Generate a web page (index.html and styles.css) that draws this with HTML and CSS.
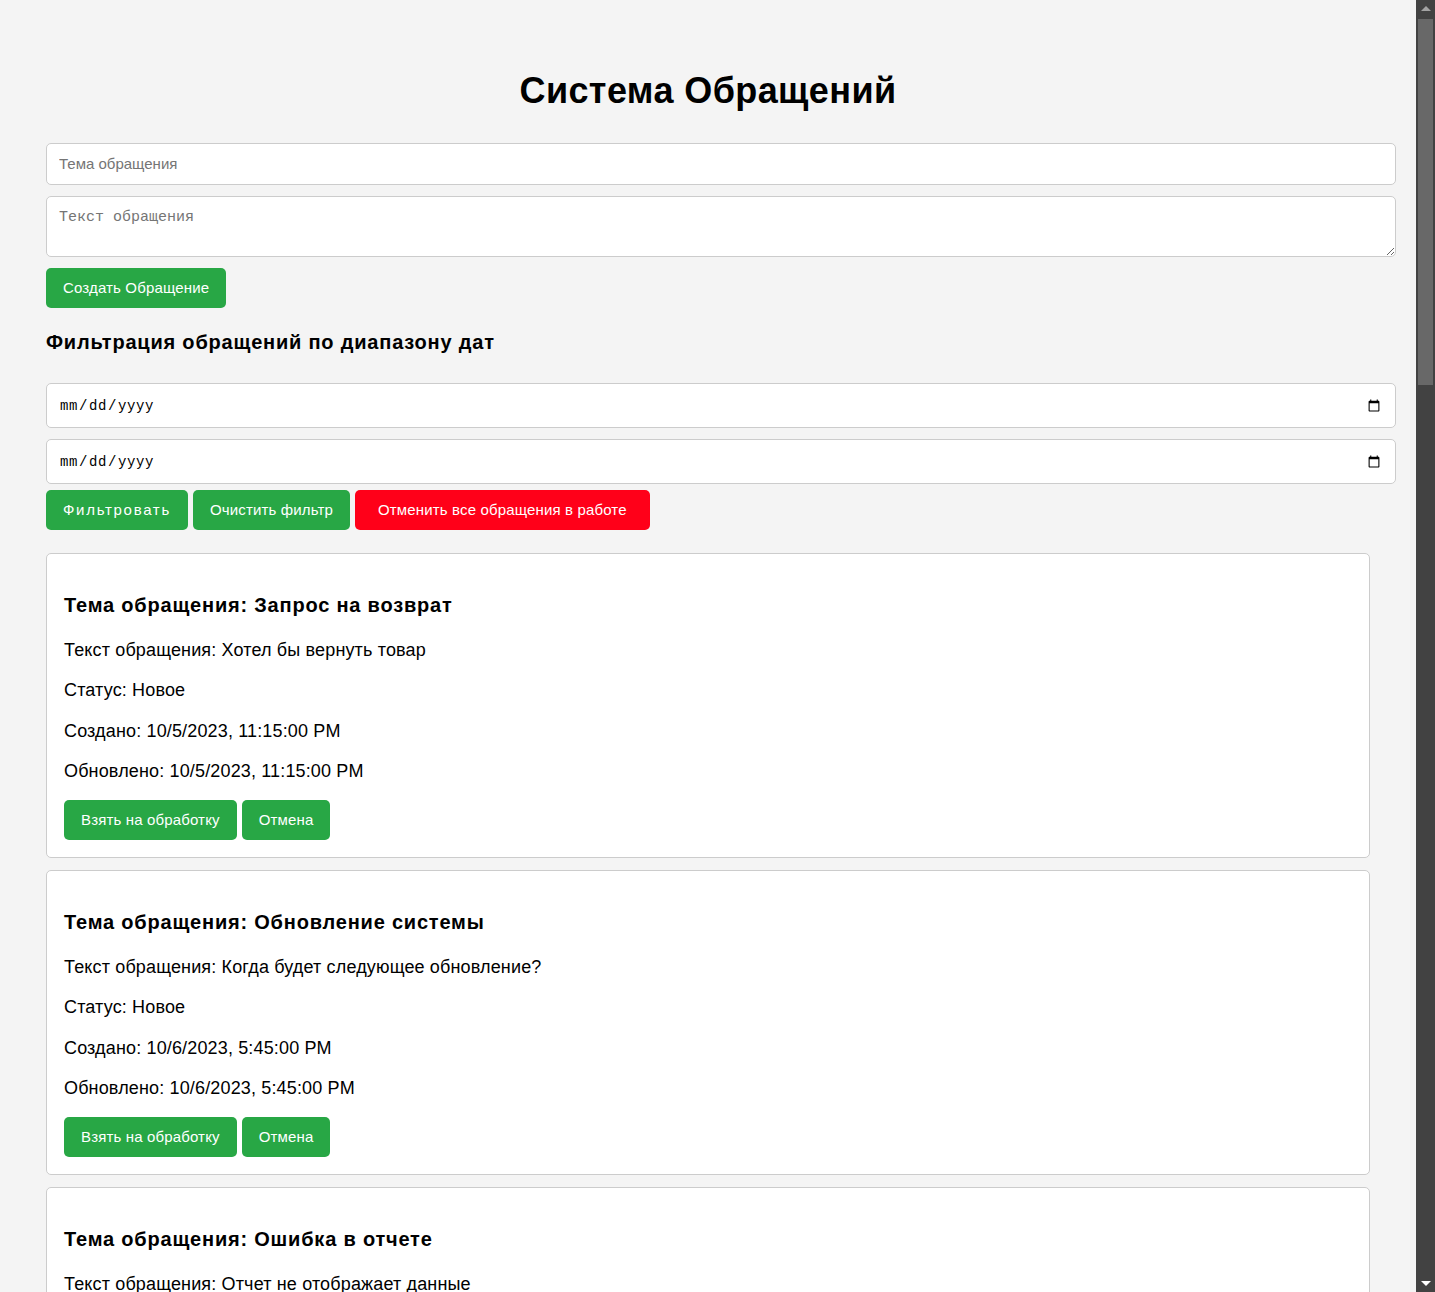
FILE: index.html
```html
<!DOCTYPE html>
<html lang="ru">
<head>
<meta charset="utf-8">
<title>Система Обращений</title>
<link rel="stylesheet" href="styles.css">
</head>
<body>
<div class="container">
  <h1 class="title">Система Обращений</h1>
  <input class="field" type="text" placeholder="Тема обращения">
  <textarea class="field area" placeholder="Текст обращения"></textarea>
  <button class="btn">Создать Обращение</button>

  <h2 class="subtitle">Фильтрация обращений по диапазону дат</h2>
  <input class="field date" type="date">
  <input class="field date" type="date">
  <div class="actions">
    <button class="btn btn-wide">Фильтровать</button>
    <button class="btn">Очистить фильтр</button>
    <button class="btn btn-danger">Отменить все обращения в работе</button>
  </div>

  <div class="list">
    <div class="card">
      <h3 class="card-title">Тема обращения: Запрос на возврат</h3>
      <p class="line">Текст обращения: Хотел бы вернуть товар</p>
      <p class="line">Статус: Новое</p>
      <p class="line">Создано: 10/5/2023, 11:15:00 PM</p>
      <p class="line">Обновлено: 10/5/2023, 11:15:00 PM</p>
      <div class="card-actions"><button class="btn">Взять на обработку</button> <button class="btn">Отмена</button></div>
    </div>
    <div class="card">
      <h3 class="card-title">Тема обращения: Обновление системы</h3>
      <p class="line">Текст обращения: Когда будет следующее обновление?</p>
      <p class="line">Статус: Новое</p>
      <p class="line">Создано: 10/6/2023, 5:45:00 PM</p>
      <p class="line">Обновлено: 10/6/2023, 5:45:00 PM</p>
      <div class="card-actions"><button class="btn">Взять на обработку</button> <button class="btn">Отмена</button></div>
    </div>
    <div class="card">
      <h3 class="card-title">Тема обращения: Ошибка в отчете</h3>
      <p class="line">Текст обращения: Отчет не отображает данные</p>
      <p class="line">Статус: Новое</p>
      <p class="line">Создано: 10/7/2023, 9:30:00 AM</p>
      <p class="line">Обновлено: 10/7/2023, 9:30:00 AM</p>
      <div class="card-actions"><button class="btn">Взять на обработку</button> <button class="btn">Отмена</button></div>
    </div>
  </div>
</div>
<div class="scrollbar" aria-hidden="true">
  <div class="sb-btn"><span class="arrow-up"></span></div>
  <div class="sb-track"><div class="sb-thumb"></div></div>
  <div class="sb-btn"><span class="arrow-down"></span></div>
</div>
</body>
</html>
```
FILE: styles.css
```css
html {
  background: #f4f4f4;
  overflow: hidden;
}
body {
  margin: 0 19px 0 0;
  background: #f4f4f4;
  font-family: "Liberation Sans", Arial, sans-serif;
  color: #000;
}
.container {
  padding: 0 46px 20px;
}
.title {
  margin: 70px 0 32px;
  font-size: 36px;
  line-height: 41px;
  letter-spacing: 0.4px;
  font-weight: bold;
  text-align: center;
}
.field {
  display: block;
  width: 100%;
  margin: 0 0 11px;
  padding: 12px;
  border: 1px solid #ccc;
  border-radius: 5px;
  background: #fff;
  font-family: "Liberation Sans", Arial, sans-serif;
  font-size: 15px;
  line-height: 16px;
  color: #000;
}
.field::placeholder {
  color: #757575;
}
.area {
  height: 34px;
  padding-top: 13px;
  font-family: "Liberation Mono", "Courier New", monospace;
  font-size: 15px;
  line-height: 16px;
  resize: vertical;
}
.date {
  height: 45px;
  box-sizing: border-box;
  width: calc(100% + 26px);
  font-family: "Liberation Mono", "Courier New", monospace;
  font-size: 14px;
  letter-spacing: 0.6px;
}
.date + .date {
  margin-bottom: 6px;
}
.btn {
  display: inline-block;
  padding: 11px 17px;
  border: 0;
  border-radius: 5px;
  background: #28a745;
  color: #fff;
  font-family: "Liberation Sans", Arial, sans-serif;
  font-size: 15px;
  line-height: 18px;
  letter-spacing: 0.15px;
  cursor: pointer;
}
.btn-wide {
  letter-spacing: 1.7px;
}
.btn-danger {
  background: #ff0019;
  padding: 11px 23px;
}
.subtitle {
  margin: 23px 0 29px;
  font-size: 20px;
  line-height: 23px;
  letter-spacing: 0.8px;
  font-weight: bold;
}
.actions {
  display: flex;
  gap: 5px;
}
.list {
  margin-top: 23px;
  display: flex;
  flex-direction: column;
  gap: 12px;
}
.card {
  background: #fff;
  border: 1px solid #ccc;
  border-radius: 5px;
  padding: 17px;
}
.card-title {
  margin: 23px 0 22px;
  font-size: 20px;
  line-height: 23px;
  letter-spacing: 0.8px;
  font-weight: bold;
}
.line {
  margin: 18px 0;
  font-size: 18px;
  line-height: 22.3px;
  letter-spacing: 0.15px;
}
.card-actions {
  display: flex;
  gap: 5px;
}
.scrollbar {
  position: fixed;
  top: 0;
  right: 0;
  width: 19px;
  height: 100vh;
  background: #424242;
  display: flex;
  flex-direction: column;
}
.sb-btn {
  height: 17px;
  display: flex;
  align-items: center;
  justify-content: center;
}
.arrow-up {
  width: 0;
  height: 0;
  border-left: 5px solid transparent;
  border-right: 5px solid transparent;
  border-bottom: 5px solid #a3a3a3;
}
.arrow-down {
  width: 0;
  height: 0;
  border-left: 5px solid transparent;
  border-right: 5px solid transparent;
  border-top: 5px solid #ffffff;
}
.sb-track {
  flex: 1;
  padding: 2px 2px 0;
}
.sb-thumb {
  height: 366px;
  background: #686868;
}
```
